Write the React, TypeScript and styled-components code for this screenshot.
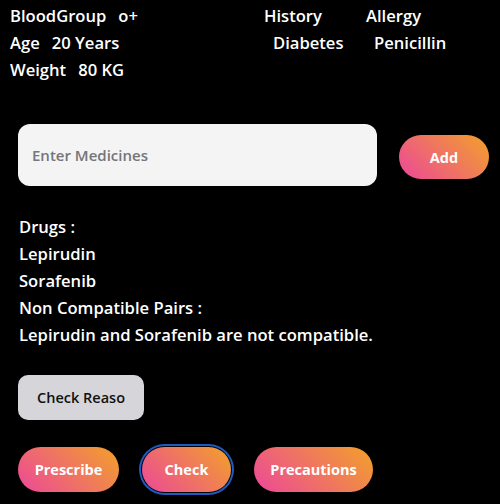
import React from 'react';
import styled, { createGlobalStyle, css } from 'styled-components';

const GlobalStyle = createGlobalStyle`
  html, body {
    margin: 0;
    padding: 0;
    background: #000;
  }
  body {
    font-family: "Open Sans", "Noto Sans", "Liberation Sans", sans-serif;
    color: #fff;
  }
`;

const Page = styled.div`
  width: 500px;
  height: 504px;
  background: #000;
  overflow: hidden;
`;

const Header = styled.div`
  display: flex;
  padding: 2px 0 0 10px;
`;

const Vitals = styled.div`
  width: 254px;
  display: flex;
  flex-direction: column;
`;

const Line = styled.div`
  display: flex;
  gap: 12px;
  height: 27px;
  align-items: center;
  font-size: 16.6px;
  font-weight: 600;
  white-space: nowrap;
`;

const HistoryCol = styled.div<{ width: number }>`
  width: ${({ width }) => width}px;
  display: flex;
  flex-direction: column;
`;

const Value = styled(Line)<{ indent: number }>`
  padding-left: ${({ indent }) => indent}px;
`;

const InputRow = styled.div`
  display: flex;
  align-items: center;
  padding: 41px 11px 0 18px;
  gap: 22px;
`;

const MedInput = styled.input`
  width: 359px;
  height: 62px;
  box-sizing: border-box;
  border: none;
  border-radius: 12px;
  background: #f4f4f4;
  padding: 0 14px;
  font-family: inherit;
  font-size: 15px;
  font-weight: 600;
  color: #333;
  outline: none;

  &::placeholder {
    color: #75757a;
  }
`;

const Pill = styled.button<{ focused?: boolean; w: number }>`
  width: ${({ w }) => w}px;
  height: 45px;
  border: none;
  border-radius: 23px;
  background: linear-gradient(45deg, #ec4899 0%, #f2a12a 100%);
  color: #fff;
  font-family: inherit;
  font-size: 14.5px;
  font-weight: 700;
  cursor: pointer;
  padding: 0;

  ${({ focused }) =>
    focused &&
    css`
      box-shadow: 0 0 0 1px #000, 0 0 0 3px #1f5bbf;
    `}
`;

const AddPill = styled(Pill)`
  margin-top: 4px;
  height: 44px;
`;

const Results = styled.div`
  padding: 27px 0 0 19px;
  display: flex;
  flex-direction: column;
`;

const ReasonButton = styled.button`
  margin: 27px 0 0 18px;
  width: 126px;
  height: 45px;
  border: none;
  border-radius: 10px;
  background: #d5d5da;
  color: #111;
  font-family: inherit;
  font-size: 14.5px;
  font-weight: 600;
  padding: 0;
  cursor: pointer;
`;

const Actions = styled.div`
  display: flex;
  gap: 23px;
  padding: 27px 0 0 18px;
  align-items: center;
`;

export default function App() {
  return (
    <Page>
      <GlobalStyle />
      <Header>
        <Vitals>
          <Line><span>BloodGroup</span><span>o+</span></Line>
          <Line><span>Age</span><span>20 Years</span></Line>
          <Line><span>Weight</span><span>80 KG</span></Line>
        </Vitals>
        <HistoryCol width={102}>
          <Line>History</Line>
          <Value indent={9}>Diabetes</Value>
        </HistoryCol>
        <HistoryCol width={120}>
          <Line>Allergy</Line>
          <Value indent={8}>Penicillin</Value>
        </HistoryCol>
      </Header>

      <InputRow>
        <MedInput placeholder="Enter Medicines" />
        <AddPill w={90}>Add</AddPill>
      </InputRow>

      <Results>
        <Line>Drugs :</Line>
        <Line>Lepirudin</Line>
        <Line>Sorafenib</Line>
        <Line>Non Compatible Pairs :</Line>
        <Line>Lepirudin and Sorafenib are not compatible.</Line>
      </Results>

      <ReasonButton>Check Reaso</ReasonButton>

      <Actions>
        <Pill w={101}>Prescribe</Pill>
        <Pill w={89} focused>Check</Pill>
        <Pill w={119}>Precautions</Pill>
      </Actions>
    </Page>
  );
}
